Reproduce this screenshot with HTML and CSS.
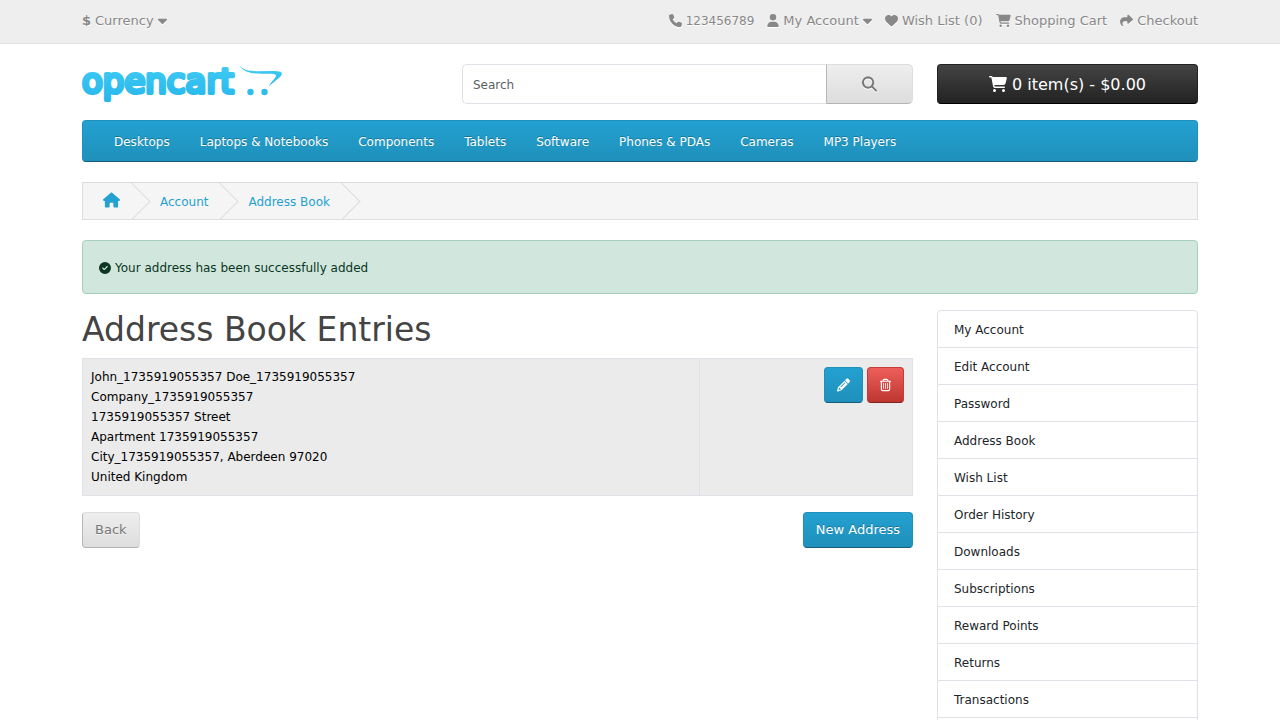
FILE: index.html
```html
<!DOCTYPE html>
<html lang="en">
<head>
<meta charset="utf-8">
<meta name="viewport" content="width=device-width, initial-scale=1">
<title>Address Book</title>
<link rel="stylesheet" href="styles.css">
</head>
<body>
<svg class="sprite" aria-hidden="true">
  <symbol id="phone" viewBox="0 0 512 512"><path d="M164.9 24.6c-7.7-18.6-28-28.5-47.4-23.2l-88 24C12.1 30.2 0 46 0 64C0 311.4 200.6 512 448 512c18 0 33.8-12.1 38.6-29.5l24-88c5.3-19.4-4.6-39.7-23.2-47.4l-96-40c-16.3-6.8-35.2-2.1-46.3 11.6L304.7 368C234.3 334.7 177.3 277.7 144 207.3L193.3 167c13.7-11.2 18.4-30 11.6-46.3l-40-96z"/></symbol>
  <symbol id="user" viewBox="0 0 448 512"><path d="M224 256A128 128 0 1 0 224 0a128 128 0 1 0 0 256zm-45.7 48C79.8 304 0 383.8 0 482.3C0 498.7 13.3 512 29.7 512H418.3c16.4 0 29.7-13.3 29.7-29.7C448 383.8 368.2 304 269.7 304H178.3z"/></symbol>
  <symbol id="heart" viewBox="0 0 512 512"><path d="M47.6 300.4L228.3 469.1c7.5 7 17.4 10.9 27.7 10.9s20.2-3.9 27.7-10.9L464.4 300.4c30.4-28.3 47.6-68 47.6-109.5v-5.8c0-69.9-50.5-129.5-119.4-141C347 36.5 300.6 51.4 268 84L256 96 244 84c-32.6-32.6-79-47.5-124.6-39.9C50.5 55.6 0 115.2 0 185.1v5.8c0 41.5 17.2 81.2 47.6 109.5z"/></symbol>
  <symbol id="cart" viewBox="0 0 576 512"><path d="M0 24C0 10.7 10.7 0 24 0H69.5c22 0 41.5 12.8 50.6 32h411c26.3 0 45.5 25 38.6 50.4l-41 152.3c-8.5 31.4-37 53.3-69.5 53.3H170.7l5.4 28.5c2.2 11.3 12.1 19.5 23.6 19.5H488c13.3 0 24 10.7 24 24s-10.7 24-24 24H199.7c-34.6 0-64.3-24.6-70.7-58.5L77.4 54.5c-.7-3.8-4-6.5-7.9-6.5H24C10.7 48 0 37.3 0 24zM128 464a48 48 0 1 1 96 0 48 48 0 1 1 -96 0zm336-48a48 48 0 1 1 0 96 48 48 0 1 1 0-96z"/></symbol>
  <symbol id="share" viewBox="0 0 512 512"><path d="M307 34.8c-11.5 5.1-19 16.6-19 29.2v64H176C78.8 128 0 206.8 0 304C0 417.3 81.5 467.9 100.2 478.1c2.5 1.4 5.3 1.9 8.1 1.9c10.9 0 19.7-8.9 19.7-19.7c0-7.5-4.3-14.4-9.8-19.5C108.8 431.9 96 414.4 96 384c0-53 43-96 96-96h96v64c0 12.6 7.4 24.1 19 29.2s25 3 34.4-5.4l160-144c6.7-6.1 10.6-14.7 10.6-23.8s-3.8-17.7-10.6-23.8l-160-144c-9.4-8.5-22.9-10.6-34.4-5.4z"/></symbol>
  <symbol id="caret" viewBox="0 0 320 512"><path d="M137.4 374.6c12.5 12.5 32.8 12.5 45.3 0l128-128c9.2-9.2 11.9-22.9 6.9-34.9s-16.6-19.8-29.6-19.8L32 192c-12.9 0-24.6 7.8-29.6 19.8s-2.2 25.7 6.9 34.9l128 128z"/></symbol>
  <symbol id="search" viewBox="0 0 512 512"><path d="M416 208c0 45.9-14.9 88.3-40 122.7L502.6 457.4c12.5 12.5 12.5 32.8 0 45.3s-32.8 12.5-45.3 0L330.7 376c-34.4 25.2-76.8 40-122.7 40C93.1 416 0 322.9 0 208S93.1 0 208 0S416 93.1 416 208zM208 352a144 144 0 1 0 0-288 144 144 0 1 0 0 288z"/></symbol>
  <symbol id="house" viewBox="0 0 576 512"><path d="M575.8 255.5c0 18-15 32.1-32 32.1h-32l.7 160.2c0 2.7-.2 5.4-.5 8.1V472c0 22.1-17.9 40-40 40H456c-1.1 0-2.2 0-3.3-.1c-1.4 .1-2.8 .1-4.2 .1H416 392c-22.1 0-40-17.9-40-40V448 384c0-17.7-14.3-32-32-32H256c-17.7 0-32 14.3-32 32v64 24c0 22.1-17.9 40-40 40H160 128.1c-1.5 0-3-.1-4.5-.2c-1.2 .1-2.4 .2-3.6 .2H104c-22.1 0-40-17.9-40-40V360c0-.9 0-1.9 .1-2.8V287.6H32c-18 0-32-14-32-32.1c0-9 3-17 10-24L266.4 8c7-7 15-8 22-8s15 2 21 7L564.8 231.5c8 7 12 15 11 24z"/></symbol>
  <symbol id="check" viewBox="0 0 512 512"><path d="M256 512A256 256 0 1 0 256 0a256 256 0 1 0 0 512zM369 209L241 337c-9.4 9.4-24.6 9.4-33.9 0l-64-64c-9.4-9.4-9.4-24.6 0-33.9s24.6-9.4 33.9 0l47 47L335 175c9.4-9.4 24.6-9.4 33.9 0s9.4 24.6 0 33.9z"/></symbol>
  <symbol id="pencil" viewBox="0 0 512 512"><path d="M410.3 231l11.3-11.3-33.9-33.9-62.1-62.1L291.7 89.8l-11.3 11.3-22.6 22.6L58.6 322.9c-10.4 10.4-18 23.3-22.2 37.4L1 480.7c-2.5 8.4-.2 17.5 6.1 23.7s15.3 8.5 23.7 6.1l120.3-35.4c14.1-4.2 27-11.8 37.4-22.2L387.7 253.7 410.3 231zM160 399.4l-9.1 22.7c-4 3.1-8.5 5.4-13.3 6.9L59.4 452l23-78.1c1.4-4.9 3.8-9.4 6.9-13.3l22.7-9.1v32c0 8.8 7.2 16 16 16h32zM362.7 18.7L348.3 33.2 325.7 55.8 314.3 67.1l33.9 33.9 62.1 62.1 33.9 33.9 11.3-11.3 22.6-22.6 14.5-14.5c25-25 25-65.5 0-90.5L453.3 18.7c-25-25-65.5-25-90.5 0zm-47.4 168l-144 144c-6.2 6.2-16.4 6.2-22.6 0s-6.2-16.4 0-22.6l144-144c6.2-6.2 16.4-6.2 22.6 0s6.2 16.4 0 22.6z"/></symbol>
  <symbol id="trash" viewBox="0 0 448 512"><path d="M170.5 51.6L151.5 80h145l-19-28.4c-1.5-2.2-4-3.6-6.7-3.6H177.1c-2.7 0-5.2 1.3-6.7 3.6zm147-26.6L354.2 80H368h48 8c13.3 0 24 10.7 24 24s-10.7 24-24 24h-8V432c0 44.2-35.8 80-80 80H112c-44.2 0-80-35.8-80-80V128H24c-13.3 0-24-10.7-24-24S10.7 80 24 80h8H80 93.8l36.7-55.1C140.9 9.4 158.4 0 177.1 0h93.7c18.7 0 36.2 9.4 46.6 24.9zM80 128V432c0 17.7 14.3 32 32 32H336c17.7 0 32-14.3 32-32V128H80zm80 64V400c0 8.8-7.2 16-16 16s-16-7.2-16-16V192c0-8.8 7.2-16 16-16s16 7.2 16 16zm80 0V400c0 8.8-7.2 16-16 16s-16-7.2-16-16V192c0-8.8 7.2-16 16-16s16 7.2 16 16zm80 0V400c0 8.8-7.2 16-16 16s-16-7.2-16-16V192c0-8.8 7.2-16 16-16s16 7.2 16 16z"/></symbol>
</svg>

<nav class="top" aria-label="Account">
  <div class="container top-row">
    <button class="top-link" type="button"><strong>$</strong> <span>Currency</span> <svg class="icon caret"><use href="#caret"/></svg></button>
    <ul class="top-links">
      <li><a class="top-link" href="#"><svg class="icon"><use href="#phone"/></svg> <span class="phone-number">123456789</span></a></li>
      <li><button class="top-link" type="button"><svg class="icon narrow"><use href="#user"/></svg> <span>My Account</span> <svg class="icon caret"><use href="#caret"/></svg></button></li>
      <li><a class="top-link" href="#"><svg class="icon"><use href="#heart"/></svg> <span>Wish List (0)</span></a></li>
      <li><a class="top-link" href="#"><svg class="icon wide"><use href="#cart"/></svg> <span>Shopping Cart</span></a></li>
      <li><a class="top-link" href="#"><svg class="icon"><use href="#share"/></svg> <span>Checkout</span></a></li>
    </ul>
  </div>
</nav>

<header class="container header">
  <a class="logo" href="#" aria-label="Opencart">
    <svg width="201" height="40" viewBox="0 0 201 40">
      <defs><linearGradient id="logo-fill" x1="0" y1="0" x2="0" y2="40" gradientUnits="userSpaceOnUse"><stop offset="0" stop-color="#40cbf4"/><stop offset="1" stop-color="#24b5ea"/></linearGradient></defs>
      <text class="logo-text" x="0" y="29">opencart</text>
      <g fill="url(#logo-fill)">
        <path d="M157 1C161 6 167 7 174 7.200L192 7Q200 7 200 9.500C200 13 192 17 187 22.500C189 17 194 14 194 11.500C194 10 190 9.700 184 9.700C171 10 162 9 157 1Z"/>
        <circle cx="168.500" cy="28" r="3.200"/>
        <circle cx="182.500" cy="28" r="3.200"/>
      </g>
    </svg>
  </a>
  <form class="search" role="search">
    <input class="search-input" type="text" placeholder="Search" aria-label="Search">
    <button class="btn btn-light search-btn" type="button" aria-label="Search"><svg class="icon"><use href="#search"/></svg></button>
  </form>
  <button class="btn btn-dark cart-btn" type="button"><svg class="icon wide"><use href="#cart"/></svg> <span>0 item(s) - $0.00</span></button>
</header>

<main class="container">
  <nav class="menu" aria-label="Categories">
    <a href="#">Desktops</a>
    <a href="#">Laptops &amp; Notebooks</a>
    <a href="#">Components</a>
    <a href="#">Tablets</a>
    <a href="#">Software</a>
    <a href="#">Phones &amp; PDAs</a>
    <a href="#">Cameras</a>
    <a href="#">MP3 Players</a>
  </nav>

  <ul class="breadcrumb">
    <li><a class="home" href="#" aria-label="Home"><svg class="icon wide"><use href="#house"/></svg></a></li>
    <li><a href="#">Account</a></li>
    <li><a href="#">Address Book</a></li>
  </ul>

  <div class="alert" role="status"><svg class="icon"><use href="#check"/></svg> <span>Your address has been successfully added</span></div>

  <div class="columns">
    <section>
      <h1>Address Book Entries</h1>
      <table class="addresses">
        <tr>
          <td>John_1735919055357 Doe_1735919055357<br>Company_1735919055357<br>1735919055357 Street<br>Apartment 1735919055357<br>City_1735919055357, Aberdeen 97020<br>United Kingdom</td>
          <td class="tools">
            <div class="tool-row">
              <a class="btn btn-primary" href="#" aria-label="Edit"><svg class="icon"><use href="#pencil"/></svg></a>
              <button class="btn btn-danger" type="button" aria-label="Delete"><svg class="icon narrow"><use href="#trash"/></svg></button>
            </div>
          </td>
        </tr>
      </table>
      <div class="actions">
        <a class="btn btn-light" href="#">Back</a>
        <a class="btn btn-primary" href="#">New Address</a>
      </div>
    </section>
    <aside>
      <nav class="side-list" aria-label="My Account">
        <a href="#">My Account</a>
        <a href="#">Edit Account</a>
        <a href="#">Password</a>
        <a href="#">Address Book</a>
        <a href="#">Wish List</a>
        <a href="#">Order History</a>
        <a href="#">Downloads</a>
        <a href="#">Subscriptions</a>
        <a href="#">Reward Points</a>
        <a href="#">Returns</a>
        <a href="#">Transactions</a>
        <a href="#">Newsletter</a>
      </nav>
    </aside>
  </div>
</main>
</body>
</html>
```
FILE: styles.css
```css
* { box-sizing: border-box; }
html { scrollbar-width: none; }
body {
  margin: 0;
  background: #fff;
  color: #212529;
  font: 12px/20px "DejaVu Sans", sans-serif;
}
a { color: inherit; text-decoration: none; }
ul { list-style: none; margin: 0; padding: 0; }
button, input { font: inherit; }
.sprite { display: none; }
.container { max-width: 1140px; margin: 0 auto; padding: 0 12px; }
.icon { width: 1em; height: 1em; fill: currentColor; flex: none; overflow: visible; }
.icon.wide { width: 18px; }
.icon.narrow { width: 11px; }
.icon.caret { width: 9px; height: 15px; }

.top { background: #eee; border-bottom: 1px solid #e2e2e2; padding: 9px 0 12px; }
.top-row { display: flex; justify-content: space-between; }
.top-links { display: flex; gap: 13px; }
.top-link {
  display: flex;
  align-items: center;
  gap: 4px;
  padding: 0;
  border: 0;
  background: none;
  color: #888;
  font-size: 13px;
  line-height: 20px;
  text-shadow: 0 1px 0 #fff;
}
.top-link span, .top-link strong { padding-top: 2px; }
.top-link .icon { filter: drop-shadow(0 1px 0 #fff); }
.top-link .icon.wide { width: 15px; }
.top-link .icon.narrow { width: 12px; }
.phone-number { font-size: 12px; }

.header {
  display: grid;
  grid-template-columns: 4fr 5fr 3fr;
  margin-top: 20px;
  margin-bottom: 16px;
  padding: 0;
}
.header > * { margin: 0 12px; }
.logo svg { display: block; overflow: visible; }
.logo-text {
  font: 34px "DejaVu Sans", sans-serif;
  fill: url(#logo-fill);
  stroke: url(#logo-fill);
  stroke-width: 4px;
  stroke-linejoin: round;
}
.search { display: flex; }
.search-input {
  flex: 1;
  min-width: 0;
  height: 40px;
  padding: 2px 10px 0;
  border: 1px solid #dee2e6;
  border-right: 0;
  border-radius: 5px 0 0 5px;
  background: #fff;
  color: #212529;
}
.search-input::placeholder { color: #5c5f63; opacity: 1; }

.btn {
  display: inline-flex;
  align-items: center;
  justify-content: center;
  gap: 4px;
  padding: 7px 12px;
  border: 1px solid;
  border-radius: 4px;
  font-size: 13px;
  line-height: 20px;
}
.btn-light {
  color: #777;
  background: linear-gradient(#eee, #ddd);
  border-color: #ddd #ddd #b3b3b3 #b7b7b7;
  text-shadow: 0 1px 0 #fff8;
}
.btn-primary {
  color: #fff;
  background: linear-gradient(#23a1d1, #1f90bb);
  border-color: #1f90bb #1f90bb #145e7a;
  text-shadow: 0 -1px 0 #00000040;
}
.btn-danger {
  color: #fff;
  background: linear-gradient(#ee5f5b, #bd362f);
  border-color: #c43c35 #c43c35 #802420;
}
.btn-dark {
  color: #fff;
  background: linear-gradient(#444, #222);
  border-color: #222 #222 #000;
}
.btn > .icon { height: 20px; }
.search-btn { padding: 0 35px; border-radius: 0 5px 5px 0; font-size: 15px; }
.search-btn .icon { filter: drop-shadow(0 1px 0 #fff); }
.cart-btn { gap: 5px; font-size: 16px; }
.cart-btn span { padding-top: 2px; }

.menu {
  display: flex;
  padding: 0 16px;
  border: 1px solid;
  border-color: #1f90bb #1f90bb #145e7a;
  border-radius: 4px;
  background: linear-gradient(#23a1d1, #1f90bb);
  color: #fff;
  text-shadow: 0 -1px 0 #00000040;
}
.menu a { padding: 11px 15px 9px; }

.breadcrumb {
  display: flex;
  height: 38px;
  margin: 20px 0;
  border: 1px solid #ddd;
  background: #f5f5f5;
  color: #23a1d1;
  overflow: hidden;
}
.breadcrumb li { position: relative; padding: 9px 20px 7px; }
.breadcrumb li::after {
  content: "";
  position: absolute;
  top: 5px;
  right: -5px;
  width: 26px;
  height: 26px;
  border-top: 1px solid #ddd;
  border-right: 1px solid #ddd;
  transform: rotate(45deg);
}
.breadcrumb .home { display: flex; }
.breadcrumb .home .icon { width: 17px; height: 16px; }

.alert {
  display: flex;
  align-items: center;
  gap: 4px;
  padding: 17px 16px 15px;
  border: 1px solid #a3cfbb;
  border-radius: 4px;
  background: #d1e7dd;
  color: #0a3622;
}

.columns { display: grid; grid-template-columns: 3fr 1fr; margin: 16px -12px 0; }
.columns > * { padding: 0 12px; }
h1 { margin: 0 0 8px; color: #444; font-size: 33px; font-weight: 400; line-height: 40px; }
.addresses { width: 100%; margin-bottom: 16px; border-collapse: collapse; color: #000; }
.addresses td { padding: 8px; border: 1px solid #dee2e6; background: #ebebeb; vertical-align: top; }
.addresses .tools { width: 213px; }
.tool-row { display: flex; justify-content: flex-end; gap: 4px; }
.actions { display: flex; justify-content: space-between; }

.side-list { border: 1px solid #dee2e6; border-radius: 4px; }
.side-list a { display: block; padding: 9px 16px 7px; border-bottom: 1px solid #dee2e6; }
.side-list a:last-child { border-bottom: 0; }
```
